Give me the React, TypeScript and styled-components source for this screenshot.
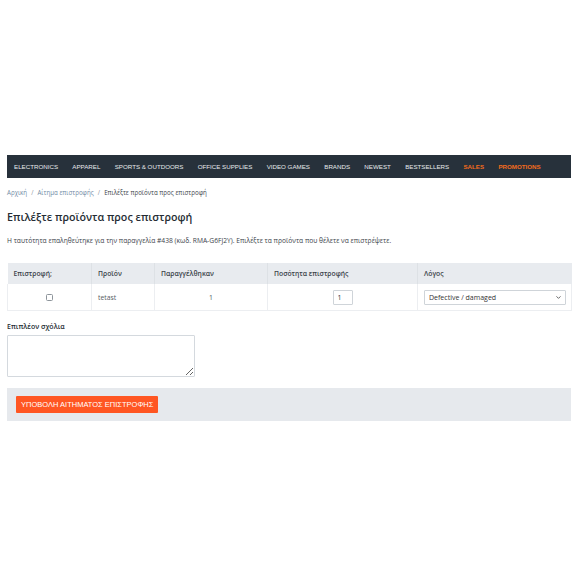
import React from 'react';
import styled, { createGlobalStyle } from 'styled-components';
import { ChevronDown } from 'lucide-react';

const GlobalStyle = createGlobalStyle`
  body {
    margin: 0;
    background: #ffffff;
    font-family: "Open Sans", "Noto Sans", sans-serif;
    color: #444b52;
  }
`;

const navItems = [
  { label: 'ELECTRONICS' },
  { label: 'APPAREL' },
  { label: 'SPORTS & OUTDOORS' },
  { label: 'OFFICE SUPPLIES' },
  { label: 'VIDEO GAMES' },
  { label: 'BRANDS' },
  { label: 'NEWEST' },
  { label: 'BESTSELLERS' },
  { label: 'SALES', hot: true },
  { label: 'PROMOTIONS', hot: true },
];

const App: React.FC = () => {
  return (
    <Page>
      <GlobalStyle />
      <Nav>
        {navItems.map((item) => (
          <NavLink key={item.label} $hot={item.hot}>
            {item.label}
          </NavLink>
        ))}
      </Nav>

      <Breadcrumb>
        <Crumb>Αρχική</Crumb>
        <Sep>/</Sep>
        <Crumb>Αίτημα επιστροφής</Crumb>
        <Sep>/</Sep>
        <Current>Επιλέξτε προϊόντα προς επιστροφή</Current>
      </Breadcrumb>

      <Heading>Επιλέξτε προϊόντα προς επιστροφή</Heading>

      <Intro>
        Η ταυτότητα επαληθεύτηκε για την παραγγελία #438 (κωδ. RMA-G6FJ2Y). Επιλέξτε τα
        προϊόντα που θέλετε να επιστρέψετε.
      </Intro>

      <Table>
        <colgroup>
          <col style={{ width: 84 }} />
          <col style={{ width: 63 }} />
          <col style={{ width: 113 }} />
          <col style={{ width: 150 }} />
          <col style={{ width: 154 }} />
        </colgroup>
        <thead>
          <tr>
            <Th>Επιστροφή;</Th>
            <Th>Προϊόν</Th>
            <Th>Παραγγέλθηκαν</Th>
            <Th>Ποσότητα επιστροφής</Th>
            <Th>Λόγος</Th>
          </tr>
        </thead>
        <tbody>
          <tr>
            <Td $align="center">
              <Check type="checkbox" />
            </Td>
            <Td>tetast</Td>
            <Td $align="center">1</Td>
            <Td $align="center">
              <QtyInput type="text" defaultValue="1" />
            </Td>
            <Td>
              <SelectWrap>
                <Select defaultValue="defective">
                  <option value="defective">Defective / damaged</option>
                  <option value="wrong">Wrong item</option>
                </Select>
                <Caret>
                  <ChevronDown size={7} strokeWidth={3} />
                </Caret>
              </SelectWrap>
            </Td>
          </tr>
        </tbody>
      </Table>

      <Field>
        <Label>Επιπλέον σχόλια</Label>
        <Comments />
      </Field>

      <Actions>
        <Submit>ΥΠΟΒΟΛΗ ΑΙΤΗΜΑΤΟΣ ΕΠΙΣΤΡΟΦΗΣ</Submit>
      </Actions>
    </Page>
  );
};

export default App;

const Page = styled.div`
  width: 564px;
  margin: 0 0 0 7px;
  padding-top: 155px;
`;

const Nav = styled.nav`
  display: flex;
  align-items: center;
  height: 23px;
  background: #27313b;
  padding: 0 7px;
  gap: 14.3px;
`;

const NavLink = styled.a<{ $hot?: boolean }>`
  font-family: "Liberation Sans", Arial, sans-serif;
  font-size: 6.2px;
  font-weight: ${(p) => (p.$hot ? 'bold' : 'normal')};
  color: ${(p) => (p.$hot ? '#f26b1d' : '#e6e9ec')};
  white-space: nowrap;
`;

const Breadcrumb = styled.div`
  display: flex;
  align-items: center;
  gap: 4px;
  margin-top: 9px;
  font-size: 6.2px;
  line-height: 12px;
`;

const Crumb = styled.a`
  color: #6f8aa5;
`;

const Sep = styled.span`
  color: #8a939b;
`;

const Current = styled.span`
  color: #3b434a;
`;

const Heading = styled.h1`
  margin: 10px 0 0;
  font-size: 10.7px;
  font-weight: 600;
  line-height: 16px;
  color: #252c33;
`;

const Intro = styled.p`
  margin: 10px 0 0;
  font-size: 6.7px;
  line-height: 12px;
  color: #3b434a;
`;

const Table = styled.table`
  width: 564px;
  margin-top: 16px;
  border-collapse: collapse;
  table-layout: fixed;
  font-size: 6.8px;
`;

const Th = styled.th`
  height: 21px;
  padding: 0 6px;
  background: #e8ebef;
  color: #3b434a;
  font-weight: 600;
  text-align: left;
  border-left: 1px solid #dde1e5;
  &:first-child {
    border-left: 0;
  }
`;

const Td = styled.td<{ $align?: string }>`
  height: 26px;
  padding: 0 6px;
  text-align: ${(p) => p.$align || 'left'};
  color: #555c63;
  border-left: 1px solid #eceef1;
  border-bottom: 1px solid #eceef1;
  &:first-child {
    border-left: 1px solid #eceef1;
  }
  &:last-child {
    border-right: 1px solid #eceef1;
  }
`;

const Check = styled.input`
  appearance: none;
  box-sizing: border-box;
  width: 7px;
  height: 7px;
  margin: 0;
  border: 1px solid #8d949b;
  border-radius: 1.5px;
  background: #fff;
  vertical-align: middle;
`;

const QtyInput = styled.input`
  box-sizing: border-box;
  width: 20px;
  height: 15px;
  padding: 0 4px;
  border: 1px solid #cfd4d9;
  border-radius: 1px;
  font-family: inherit;
  font-size: 7px;
  color: #333;
  vertical-align: middle;
`;

const SelectWrap = styled.div`
  position: relative;
  width: 142px;
  height: 15px;
`;

const Select = styled.select`
  appearance: none;
  box-sizing: border-box;
  width: 100%;
  height: 15px;
  padding: 0 4px;
  border: 1px solid #cfd4d9;
  border-radius: 1px;
  background: #fff;
  font-family: inherit;
  font-size: 7px;
  color: #333;
`;

const Caret = styled.span`
  position: absolute;
  right: 4px;
  top: 4px;
  display: flex;
  color: #555;
  pointer-events: none;
`;

const Field = styled.div`
  margin-top: 10px;
  display: flex;
  flex-direction: column;
  gap: 3px;
`;

const Label = styled.label`
  font-size: 7px;
  font-weight: 600;
  line-height: 11px;
  color: #252c33;
`;

const Comments = styled.textarea`
  box-sizing: border-box;
  width: 188px;
  height: 42px;
  margin: 0;
  border: 1px solid #d4d9de;
  border-radius: 1px;
  font-family: inherit;
  font-size: 7px;
`;

const Actions = styled.div`
  margin-top: 11px;
  height: 33px;
  padding: 0 9px;
  display: flex;
  align-items: center;
  background: #e6e9ed;
`;

const Submit = styled.button`
  height: 17px;
  padding: 0 5px;
  border: 0;
  border-radius: 1px;
  background: #ff5622;
  color: #ffffff;
  font-family: "Liberation Sans", Arial, sans-serif;
  font-size: 7.5px;
  cursor: pointer;
`;
